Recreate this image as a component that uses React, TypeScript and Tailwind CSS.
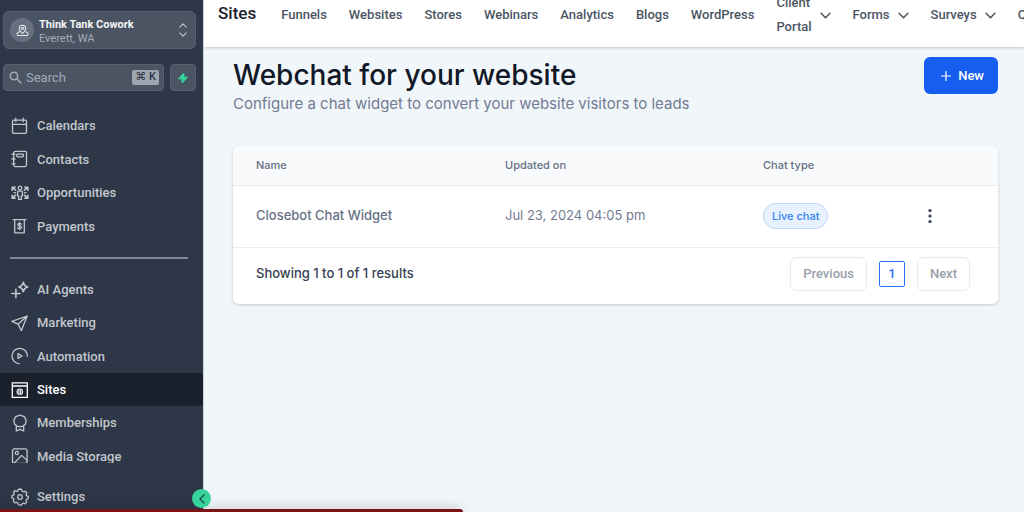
import type { ReactNode } from "react";

const Icon = ({ children }: { children: ReactNode }) => (
  <svg
    viewBox="0 0 18 18"
    className="size-[18px] shrink-0"
    fill="none"
    stroke="currentColor"
    strokeWidth="1.3"
    strokeLinecap="round"
    strokeLinejoin="round"
    aria-hidden="true"
  >
    {children}
  </svg>
);

const Chevron = ({ className }: { className: string }) => (
  <svg viewBox="0 0 10 6" className={className} fill="none" stroke="currentColor" strokeWidth="1.4" strokeLinecap="round" strokeLinejoin="round" aria-hidden="true">
    <path d="M1 1l4 4 4-4" />
  </svg>
);

type Item = { label: string; icon: ReactNode; active?: boolean };

const primary: Item[] = [
  {
    label: "Calendars",
    icon: (
      <>
        <rect x="1.500" y="3.200" width="14" height="13.200" rx="1.300" />
        <path d="M1.500 7.300h14M4.800 1.200v3.400M12.200 1.200v3.400" />
      </>
    ),
  },
  {
    label: "Contacts",
    icon: (
      <>
        <rect x="2.700" y="1.400" width="12.800" height="15.200" rx="1.500" />
        <rect x="5.800" y="4.200" width="6.600" height="2.600" rx=".7" />
        <path d="M1 4.200h3M1 9h3M1 13.800h3" />
      </>
    ),
  },
  {
    label: "Opportunities",
    icon: (
      <>
        <circle cx="9" cy="4" r="1.800" />
        <path d="M7.400 7.200h3.200a.8.8 0 01.8.8v3.800h-1v3.600H7.600v-3.600h-1V8a.8.8 0 01.8-.8z" />
        <path d="M4.600 6.200L1.600 3.600M1.200 6.200V3.200h3M13.400 6.200l3-2.600M13.800 3.200h3v3M4.600 11.200L1.600 13.800M1.200 11.200v3h3M13.400 11.200l3 2.600M13.800 14.200h3v-3" strokeWidth="1.600" />
        <path d="M3 8.700h1.400M13.600 8.700H15" />
      </>
    ),
  },
  {
    label: "Payments",
    icon: (
      <>
        <path d="M2 2.600h13M3.700 2.600v13.200h9.600V2.600" />
        <path d="M10.300 7.200c-.3-.6-1-.9-1.800-.9-1 0-1.800.5-1.800 1.300S7.500 8.800 8.500 9s1.900.5 1.900 1.400S9.500 11.800 8.500 11.800s-1.700-.4-1.900-1M8.500 5.400v7.300" />
      </>
    ),
  },
];

const secondary: Item[] = [
  {
    label: "AI Agents",
    icon: (
      <>
        <path d="M12.300 1.400c.6 2.700 1.900 4 4.400 4.600-2.500.6-3.800 1.900-4.400 4.600-.6-2.700-1.900-4-4.400-4.600 2.500-.6 3.800-1.900 4.400-4.600z" strokeWidth="1.600" />
        <path d="M4.900 8.400v8.200M.8 12.500H9" strokeWidth="1.600" />
      </>
    ),
  },
  { label: "Marketing", icon: <path d="M16.200 2L.9 7.400l6.200 2.800L10.400 16.600 16.200 2zM7.100 10.200L16.200 2" /> },
  {
    label: "Automation",
    icon: (
      <>
        <path d="M8.200 16.700A7.700 7.700 0 1116.400 9.300" />
        <path d="M7 6.600v4.800l4-2.400z" />
      </>
    ),
  },
  {
    label: "Sites",
    active: true,
    icon: (
      <>
        <path d="M1.300 1.800h15v14.600h-15zM1.300 5h15" strokeLinejoin="miter" />
        <circle cx="8.800" cy="10.700" r="3.300" fill="currentColor" stroke="none" />
        <path d="M8.800 8v5.400M7 9.400v2.600M10.600 9.400v2.600" stroke="#1a202c" strokeWidth=".7" />
      </>
    ),
  },
  {
    label: "Memberships",
    icon: (
      <>
        <path d="M7 1.900Q9 .5 11 1.900q2.500.1 3 2.300 1.700 1.600.8 3.700.3 2.500-1.900 3.200-1.300 2-3.900 1.400-2.600.6-3.900-1.400-2.200-.7-1.900-3.200-.9-2.100.8-3.700.5-2.200 3-2.300z" />
        <path d="M5.300 12v5L9 15.400l3.700 1.600v-5" />
      </>
    ),
  },
  {
    label: "Media Storage",
    icon: (
      <>
        <rect x="1.500" y="1.900" width="14.600" height="14.600" rx="1.800" />
        <circle cx="5.800" cy="6" r="1.600" />
        <path d="M3.300 16l7.300-7.600 5.300 5" />
      </>
    ),
  },
];

function NavItem({ label, icon, active }: Item) {
  return (
    <a
      href="#"
      aria-current={active ? "page" : undefined}
      className={
        active
          ? "flex items-center gap-2 rounded-r bg-[#1a202c] pl-[11px] text-white"
          : "flex items-center gap-2 pl-[11px] text-[#c3c6cb]"
      }
    >
      <Icon>{icon}</Icon>
      {label}
    </a>
  );
}

function Sidebar() {
  return (
    <aside className="relative flex w-[203px] shrink-0 flex-col bg-[#2d3748] font-['Roboto',sans-serif] text-[13px] font-medium">
      <div className="flex flex-col gap-[15px] pt-[11px] pr-[7px] pl-[3px]">
        <button className="flex h-[38px] items-center rounded-md border border-[#566070] bg-[#4a5463] pr-2 pl-[6px] text-left">
          <span className="grid size-6 shrink-0 place-items-center rounded-full bg-[#667080] text-[#e6e8eb]">
            <svg viewBox="0 0 14 14" className="size-[13px]" fill="none" stroke="currentColor" strokeWidth="1.100" strokeLinejoin="round" strokeLinecap="round" aria-hidden="true">
              <path d="M7 10.200C5 8.300 3.600 6.700 3.600 4.800a3.400 3.400 0 016.800 0c0 1.900-1.400 3.500-3.400 5.400z" />
              <circle cx="7" cy="4.700" r="1.200" />
              <path d="M3.600 8.400L1.500 9.600c-.6.700-.3 2.600.6 2.900h9.800c.9-.3 1.200-2.200.6-2.900l-2.100-1.200" />
            </svg>
          </span>
          <span className="ml-[5px] flex-1 pt-[3px]">
            <span className="block text-[11px] leading-[14px] font-bold text-[#f3f4f6]">Think Tank Cowork</span>
            <span className="block text-[11px] leading-[14px] font-normal text-[#a4abb6]">Everett, WA</span>
          </span>
          <span className="flex flex-col gap-1 text-[#c3c8d0]">
            <Chevron className="h-[5px] w-2 rotate-180" />
            <Chevron className="h-[5px] w-2" />
          </span>
        </button>
        <div className="flex h-[27px] gap-[6px]">
          <label className="flex min-w-0 flex-1 items-center gap-1 rounded border border-[#566070] bg-[#4a5463] pr-1 pl-[5px] text-[#a4abb6]">
            <svg viewBox="0 0 13 13" className="size-[13px] shrink-0" fill="none" stroke="currentColor" strokeWidth="1.600" strokeLinecap="round" aria-hidden="true">
              <circle cx="5" cy="5" r="3.700" />
              <path d="M8 8l4 4" />
            </svg>
            <input
              type="text"
              aria-label="Search"
              placeholder="Search"
              className="w-0 min-w-0 flex-1 bg-transparent font-normal outline-none placeholder:text-[#a4abb6]"
            />
            <kbd className="flex h-[15px] items-center rounded-xs bg-[#a0a5b0] px-[3px] font-['Roboto','DejaVu_Sans',sans-serif] text-[11px] font-medium text-[#2d3748]">⌘ K</kbd>
          </label>
          <button aria-label="Quick actions" className="grid w-[26px] place-items-center rounded border border-[#566070] bg-[#4a5463] text-[#37d39b]">
            <svg viewBox="0 0 12 12" className="size-3" fill="currentColor" stroke="currentColor" strokeLinejoin="round" aria-hidden="true">
              <path d="M6.800 1L1.300 6.800h3.700L5 11l5.700-5.800H7z" />
            </svg>
          </button>
        </div>
      </div>
      <nav className="mt-[18px] h-[354px] shrink-0 overflow-hidden">
        <div className="grid h-[134px] grid-rows-4">
          {primary.map((item) => (
            <NavItem key={item.label} {...item} />
          ))}
        </div>
        <hr className="mt-[14px] mr-[15px] mb-[14px] ml-[10px] border-t-2 border-[#7f8894]" />
        <div className="grid h-[200px] grid-rows-6">
          {secondary.map((item) => (
            <NavItem key={item.label} {...item} />
          ))}
        </div>
      </nav>
      <a href="#" className="mt-[17px] flex h-[33px] shrink-0 items-center gap-2 pl-[11px] text-[#c3c6cb]">
        <Icon>
          <path d="M9 1l1.700.4.5 1.900 1.100.6 1.900-.6 1.500 1.500-.6 1.900.5 1.100 1.700.6.200 1.200-.5 1.200-1.500.5-.5 1.200.6 1.700-1.500 1.600-1.800-.6-1.200.6-.5 1.500L9 17l-1.600-.4-.6-1.700-1.100-.6-1.900.6-1.400-1.600.6-1.700-.6-1.200-1.500-.6L.8 9l.3-1.400 1.500-.5.500-1.200-.6-1.700L3.900 2.700l1.800.6 1.200-.5.500-1.500z" />
          <circle cx="9" cy="9" r="2.300" />
        </Icon>
        Settings
      </a>
      <button aria-label="Collapse sidebar" className="absolute top-[489px] right-[-8px] z-10 grid size-[19px] place-items-center rounded-full bg-[#37d39b] text-[#1f4a47]">
        <Chevron className="h-[6px] w-[10px] rotate-90" />
      </button>
    </aside>
  );
}

const tabs = ["Funnels", "Websites", "Stores", "Webinars", "Analytics", "Blogs", "WordPress"];
const menus = ["Forms", "Surveys"];

function TopBar() {
  return (
    <header className="relative flex h-[47px] shrink-0 items-center overflow-visible bg-white pb-[17px] pl-[14px] font-['Roboto',sans-serif] text-[13px] leading-6 font-medium whitespace-nowrap text-[#4b5563] shadow-[0_1px_3px_rgba(0,0,0,0.2)]">
      <h2 className="mr-[25px] -mt-1 text-[17px] text-[#1a202c]">Sites</h2>
      <nav className="flex items-center gap-[22px]">
        {tabs.map((t) => (
          <a key={t} href="#">{t}</a>
        ))}
        <button className="flex items-center gap-2 text-left">
          <span>Client<br />Portal</span>
          <Chevron className="h-[7px] w-[11px]" />
        </button>
        {menus.map((m) => (
          <button key={m} className="flex items-center gap-2">
            {m}
            <Chevron className="h-[7px] w-[11px]" />
          </button>
        ))}
        <button>Quizzes</button>
      </nav>
    </header>
  );
}

export default function App() {
  return (
    <div className="relative flex h-screen overflow-hidden bg-[#f1f6fa]">
      <Sidebar />
      <div className="flex min-w-0 flex-1 flex-col overflow-hidden border-l border-[#cbd5e0]">
        <TopBar />
        <main className="pt-[10px] pr-[26px] pl-[29px] font-['Inter',sans-serif]">
          <div className="flex items-start justify-between">
            <div>
              <h1 className="text-[28px] leading-9 font-medium text-[#111827]">Webchat for your website</h1>
              <p className="text-[15px] leading-[22px] text-[#737b92]">Configure a chat widget to convert your website visitors to leads</p>
            </div>
            <button className="flex h-[37px] items-center gap-[6px] rounded-md bg-[#155eef] pr-[14px] pl-4 font-['Roboto',sans-serif] text-[13px] font-medium text-white">
              <svg viewBox="0 0 12 12" className="size-3" fill="none" stroke="currentColor" strokeWidth="1.200" strokeLinecap="round" aria-hidden="true">
                <path d="M6 1.500v9M1.500 6h9" />
              </svg>
              New
            </button>
          </div>
          <section className="mt-[31px] overflow-hidden rounded-md bg-white shadow-[0_1px_3px_rgba(16,24,40,0.2)]">
            <table className="w-full table-fixed border-collapse text-left text-[#667085]">
              <thead className="bg-[#f9fafb] text-[11px]">
                <tr className="h-[39px] border-b border-[#eaecf0]">
                  <th className="w-[249px] pl-[23px] font-medium">Name</th>
                  <th className="w-[258px] pl-[23px] font-medium">Updated on</th>
                  <th className="w-[152px] pl-[23px] font-medium">Chat type</th>
                  <th className="pl-[23px]" aria-label="Actions" />
                </tr>
              </thead>
              <tbody className="text-[13px]">
                <tr className="h-[62px] border-b border-[#eaecf0]">
                  <td className="pl-[23px] font-medium">Closebot Chat Widget</td>
                  <td className="pl-[23px] text-[#737b92]">Jul 23, 2024 04:05 pm</td>
                  <td className="pl-[23px]">
                    <span className="inline-flex h-[26px] items-center rounded-full border border-[#b9d7fb] bg-[#e8f1fd] px-2 text-[11px] font-medium text-[#2e83f2]">Live chat</span>
                  </td>
                  <td className="pl-[23px]">
                    <button aria-label="More actions" className="block px-2 text-[#344054]">
                      <svg viewBox="0 0 14 16" className="h-4 w-[14px]" fill="currentColor" aria-hidden="true">
                        <circle cx="7" cy="2.500" r="1.600" />
                        <circle cx="7" cy="8" r="1.600" />
                        <circle cx="7" cy="13.500" r="1.600" />
                      </svg>
                    </button>
                  </td>
                </tr>
              </tbody>
            </table>
            <div className="flex h-14 items-center justify-between pr-7 pb-[3px] pl-[23px]">
              <p className="text-[13px] font-medium text-[#344054]">Showing 1 to 1 of 1 results</p>
              <div className="flex items-center gap-3 font-['Roboto',sans-serif] text-[13px] font-medium text-[#98a0ab]">
                <button className="h-[34px] rounded-md border border-[#e7eaee] px-3">Previous</button>
                <button aria-current="page" className="size-[26px] rounded-xs border border-[#2970ff] text-[#2970ff]">1</button>
                <button className="h-[34px] rounded-md border border-[#e7eaee] px-3">Next</button>
              </div>
            </div>
          </section>
        </main>
      </div>
      <div className="absolute bottom-0 left-0 h-[3px] w-[463px] rounded-tr bg-[#7a1315] shadow-[0_0_12px_rgba(0,0,0,0.4)]" />
    </div>
  );
}
